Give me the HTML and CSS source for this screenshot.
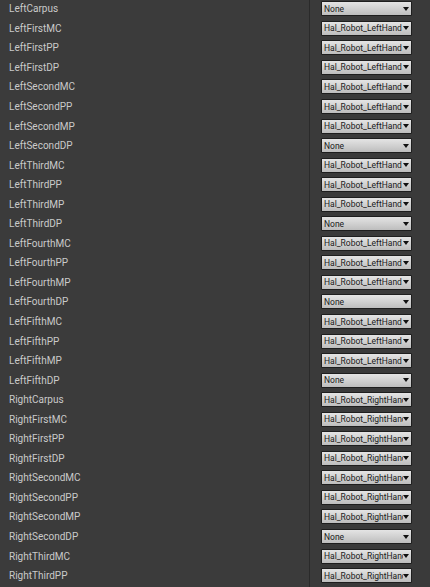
FILE: index.html
```html
<!DOCTYPE html>
<html>
<head>
<meta charset="utf-8">
<link rel="stylesheet" href="styles.css">
</head>
<body>
<div class="panel">
  <div class="row"><div class="label">LeftCarpus</div><div class="value"><div class="combo"><span class="combo-text">None</span><span class="arrow"></span></div></div></div>
  <div class="row"><div class="label">LeftFirstMC</div><div class="value"><div class="combo"><span class="combo-text">Hal_Robot_LeftHand</span><span class="arrow"></span></div></div></div>
  <div class="row"><div class="label">LeftFirstPP</div><div class="value"><div class="combo"><span class="combo-text">Hal_Robot_LeftHand</span><span class="arrow"></span></div></div></div>
  <div class="row"><div class="label">LeftFirstDP</div><div class="value"><div class="combo"><span class="combo-text">Hal_Robot_LeftHand</span><span class="arrow"></span></div></div></div>
  <div class="row"><div class="label">LeftSecondMC</div><div class="value"><div class="combo"><span class="combo-text">Hal_Robot_LeftHand</span><span class="arrow"></span></div></div></div>
  <div class="row"><div class="label">LeftSecondPP</div><div class="value"><div class="combo"><span class="combo-text">Hal_Robot_LeftHand</span><span class="arrow"></span></div></div></div>
  <div class="row"><div class="label">LeftSecondMP</div><div class="value"><div class="combo"><span class="combo-text">Hal_Robot_LeftHand</span><span class="arrow"></span></div></div></div>
  <div class="row"><div class="label">LeftSecondDP</div><div class="value"><div class="combo"><span class="combo-text">None</span><span class="arrow"></span></div></div></div>
  <div class="row"><div class="label">LeftThirdMC</div><div class="value"><div class="combo"><span class="combo-text">Hal_Robot_LeftHand</span><span class="arrow"></span></div></div></div>
  <div class="row"><div class="label">LeftThirdPP</div><div class="value"><div class="combo"><span class="combo-text">Hal_Robot_LeftHand</span><span class="arrow"></span></div></div></div>
  <div class="row"><div class="label">LeftThirdMP</div><div class="value"><div class="combo"><span class="combo-text">Hal_Robot_LeftHand</span><span class="arrow"></span></div></div></div>
  <div class="row"><div class="label">LeftThirdDP</div><div class="value"><div class="combo"><span class="combo-text">None</span><span class="arrow"></span></div></div></div>
  <div class="row"><div class="label">LeftFourthMC</div><div class="value"><div class="combo"><span class="combo-text">Hal_Robot_LeftHand</span><span class="arrow"></span></div></div></div>
  <div class="row"><div class="label">LeftFourthPP</div><div class="value"><div class="combo"><span class="combo-text">Hal_Robot_LeftHand</span><span class="arrow"></span></div></div></div>
  <div class="row"><div class="label">LeftFourthMP</div><div class="value"><div class="combo"><span class="combo-text">Hal_Robot_LeftHand</span><span class="arrow"></span></div></div></div>
  <div class="row"><div class="label">LeftFourthDP</div><div class="value"><div class="combo"><span class="combo-text">None</span><span class="arrow"></span></div></div></div>
  <div class="row"><div class="label">LeftFifthMC</div><div class="value"><div class="combo"><span class="combo-text">Hal_Robot_LeftHand</span><span class="arrow"></span></div></div></div>
  <div class="row"><div class="label">LeftFifthPP</div><div class="value"><div class="combo"><span class="combo-text">Hal_Robot_LeftHand</span><span class="arrow"></span></div></div></div>
  <div class="row"><div class="label">LeftFifthMP</div><div class="value"><div class="combo"><span class="combo-text">Hal_Robot_LeftHand</span><span class="arrow"></span></div></div></div>
  <div class="row"><div class="label">LeftFifthDP</div><div class="value"><div class="combo"><span class="combo-text">None</span><span class="arrow"></span></div></div></div>
  <div class="row"><div class="label">RightCarpus</div><div class="value"><div class="combo"><span class="combo-text">Hal_Robot_RightHand</span><span class="arrow"></span></div></div></div>
  <div class="row"><div class="label">RightFirstMC</div><div class="value"><div class="combo"><span class="combo-text">Hal_Robot_RightHand</span><span class="arrow"></span></div></div></div>
  <div class="row"><div class="label">RightFirstPP</div><div class="value"><div class="combo"><span class="combo-text">Hal_Robot_RightHand</span><span class="arrow"></span></div></div></div>
  <div class="row"><div class="label">RightFirstDP</div><div class="value"><div class="combo"><span class="combo-text">Hal_Robot_RightHand</span><span class="arrow"></span></div></div></div>
  <div class="row"><div class="label">RightSecondMC</div><div class="value"><div class="combo"><span class="combo-text">Hal_Robot_RightHand</span><span class="arrow"></span></div></div></div>
  <div class="row"><div class="label">RightSecondPP</div><div class="value"><div class="combo"><span class="combo-text">Hal_Robot_RightHand</span><span class="arrow"></span></div></div></div>
  <div class="row"><div class="label">RightSecondMP</div><div class="value"><div class="combo"><span class="combo-text">Hal_Robot_RightHand</span><span class="arrow"></span></div></div></div>
  <div class="row"><div class="label">RightSecondDP</div><div class="value"><div class="combo"><span class="combo-text">None</span><span class="arrow"></span></div></div></div>
  <div class="row"><div class="label">RightThirdMC</div><div class="value"><div class="combo"><span class="combo-text">Hal_Robot_RightHand</span><span class="arrow"></span></div></div></div>
  <div class="row"><div class="label">RightThirdPP</div><div class="value"><div class="combo"><span class="combo-text">Hal_Robot_RightHand</span><span class="arrow"></span></div></div></div>
  <div class="row"><div class="label">RightThirdMP</div><div class="value"><div class="combo"><span class="combo-text">Hal_Robot_RightHand</span><span class="arrow"></span></div></div></div>
</div>
</body>
</html>
```
FILE: styles.css
```css
html, body {
  margin: 0;
  padding: 0;
  background: #3a3a3a;
  overflow: hidden;
}
.panel {
  margin-top: -1px;
  font-family: Roboto, "Liberation Sans", sans-serif;
}
.row {
  display: flex;
  height: 19.55px;
  align-items: stretch;
}
.label {
  width: 310px;
  box-sizing: border-box;
  padding-left: 9px;
  display: flex;
  align-items: center;
  font-size: 10px;
  color: #cacaca;
  background: #3b3b3b;
  border-right: 1px solid #2a2a2a;
}
.value {
  flex: 1;
  display: flex;
  align-items: center;
  padding-left: 11px;
}
.combo {
  width: 91px;
  height: 15px;
  box-sizing: border-box;
  border: 1px solid #1e1e1e;
  border-radius: 1px;
  background: linear-gradient(#e4e4e4, #cdcdcd 60%, #bdbdbd);
  display: flex;
  align-items: center;
  padding-left: 2px;
}
.combo-text {
  flex: 1;
  min-width: 0;
  overflow: hidden;
  white-space: nowrap;
  font-family: Roboto, "Liberation Sans", Arial, sans-serif;
  font-size: 8.5px;
  color: #1a1a1a;
}
.arrow {
  flex: none;
  width: 0;
  height: 0;
  margin: 0 2px 0 0;
  border-left: 3.5px solid transparent;
  border-right: 3.5px solid transparent;
  border-top: 4px solid #111;
}
```
